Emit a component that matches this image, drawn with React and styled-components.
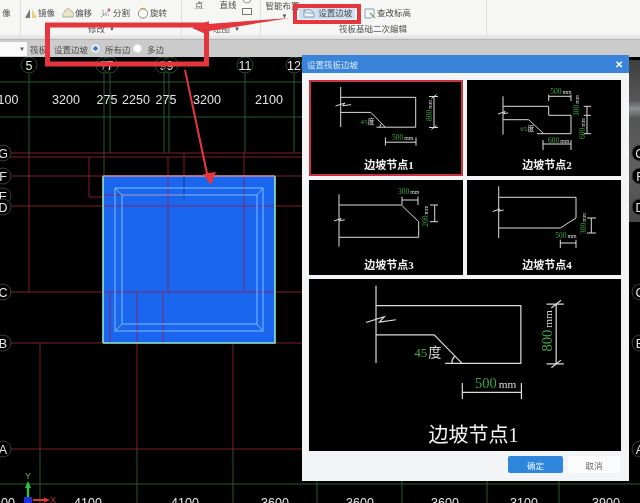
import React from 'react';
import styled, { createGlobalStyle } from 'styled-components';

const GlobalStyle = createGlobalStyle`
html, body {
	margin: 0;
	padding: 0;
	background: #000;
}
`;

const sansStack = `"Liberation Sans", "Noto Sans CJK SC", sans-serif`;
const serifStack = `"Liberation Serif", "Noto Sans CJK SC", serif`;

const Page = styled.div`
position: relative;
display: flex;
flex-direction: column;
width: 640px;
height: 503px;
overflow: hidden;
font-family: ${sansStack};
filter: blur(.5px);
`;

/* ribbon */
const Ribbon = styled.div`
display: flex;
flex: none;
height: 39px;
background: linear-gradient(#f6f6f5 85%, #dedede);
color: #4a4a4a;
font-size: 8.5px;
`;
const RibbonGroup = styled.div`
display: flex;
flex-direction: column;
flex: none;
box-sizing: border-box;
width: ${({$width}) => $width}px;
padding-left: ${({$inset}) => $inset || 0}px;
border-right: 1px solid #dfdfdf;
overflow: hidden;
`;
const ToolRow = styled.div`
display: flex;
height: 22px;
box-sizing: border-box;
padding-top: ${({$raised}) => $raised ? 0 : 4}px;
align-items: ${({$raised}) => $raised ? 'flex-start' : 'center'};
`;
const Tool = styled.div`
display: flex;
align-items: center;
gap: 1px;
flex: none;
width: ${({$width}) => $width}px;
margin-left: ${({$offset}) => $offset || 0}px;
line-height: 11px;
white-space: nowrap;
`;
const ActiveTool = styled(Tool)`
height: 12px;
padding-left: 4px;
box-sizing: border-box;
background: #cddff0;
`;
const ToolStack = styled.div`
display: flex;
flex-direction: column;
align-items: center;
flex: none;
width: ${({$width}) => $width}px;
margin-left: ${({$offset}) => $offset || 0}px;
line-height: 11px;
white-space: nowrap;
`;
const TallToolStack = styled(ToolStack)`
margin-top: -4px;
line-height: 10px;
`;
const GroupLabel = styled.div`
height: 14px;
line-height: 14px;
color: #555;
text-align: ${({$right}) => $right ? 'right' : 'left'};
padding-left: ${({$pad}) => $pad || 0}px;
padding-right: ${({$padRight}) => $padRight || 0}px;
`;
const Caret = styled.span`
font-size: 6px;
margin-left: 4px;
vertical-align: 1px;
`;

/* option bar under the ribbon */
const OptionBar = styled.div`
display: flex;
align-items: center;
flex: none;
height: 18px;
box-sizing: border-box;
border-top: 1px solid #b5b5b5;
background: #cbcbcb;
color: #4c4c4c;
font-size: 8.5px;
`;
const Combo = styled.div`
display: flex;
justify-content: flex-end;
align-items: center;
box-sizing: border-box;
width: 27px;
height: 14px;
padding-right: 2px;
margin-right: 3px;
background: #fafafa;
color: #555;
font-size: 6px;
`;
const OptionLabel = styled.span`
flex: none;
width: ${({$width}) => $width}px;
white-space: nowrap;
`;
const Radio = styled.span`
flex: none;
box-sizing: border-box;
width: 9px;
height: 9px;
margin-right: ${({$gap}) => $gap}px;
border-radius: 50%;
background: ${({$on}) => $on ? 'radial-gradient(#3d7fd0 0 2px, #fff 2.5px)' : '#fff'};
border: 1px solid #e2e2e2;
`;

/* drawing area */
const Canvas = styled.div`
position: relative;
flex: 1;
min-height: 0;
background: #000;
`;
const CanvasSvg = styled.svg`
position: relative;
z-index: 1;
display: block;
width: 640px;
height: 446px;
`;
const SideDock = styled.div`
position: absolute;
top: 3px;
right: 0;
width: 12px;
height: 162px;
background: linear-gradient(#3f3f3f, #565656 25%, #8b8f8f 30%, #565656 36%, #5f5f5f 70%, #474747);
`;
const GridText = styled.text`
fill: #e4e4e4;
font-family: ${sansStack};
font-size: 12.5px;
text-anchor: middle;
`;

/* dialog */
const Dialog = styled.div`
position: absolute;
left: 302px;
top: 55px;
z-index: 2;
width: 327px;
height: 426px;
display: flex;
flex-direction: column;
background: #f3f4f6;
`;
const DialogTitle = styled.div`
display: flex;
justify-content: space-between;
align-items: center;
flex: none;
height: 18px;
padding: 0 6px 0 5px;
background: #3a83da;
color: #dce9f8;
font-size: 8.5px;
`;
const CloseMark = styled.span`
color: #fff;
font-size: 10px;
font-weight: bold;
`;
const NodeGrid = styled.div`
display: grid;
grid-template-columns: 154px 154px;
grid-template-rows: 96px 95px 172px;
gap: 4px;
margin: 7px 8px 0 7px;
`;
const NodeCell = styled.div`
display: flex;
flex-direction: column;
grid-column: ${({$wide}) => $wide ? '1 / 3' : 'auto'};
background: #000;
box-shadow: ${({$active}) => $active ? 'inset 0 0 0 2px #c8323c' : 'none'};
`;
const NodeCaption = styled.div`
text-align: center;
padding-left: ${({$large}) => $large ? 17 : 6}px;
margin-top: ${({$large}) => $large ? 3 : -2}px;
color: #f2f2f2;
font-family: ${serifStack};
font-weight: ${({$large}) => $large ? 'normal' : 'bold'};
font-size: ${({$large}) => $large ? 20 : 11}px;
line-height: ${({$large}) => $large ? 26 : 18}px;
`;
const NodeSvg = styled.svg`
display: block;
flex: none;
width: 100%;
height: ${({$large}) => $large ? 140 : 78}px;
fill: none;
stroke: #dcdcdc;
stroke-width: ${({$large}) => $large ? 1.2 : 1}px;

path {
	vector-effect: non-scaling-stroke;
}
`;
const DimText = styled.text`
stroke: none;
font-family: ${serifStack};
font-size: ${({$size}) => $size || 7.5}px;
`;
const Num = styled.tspan`
fill: #3fa53f;
`;
const Unit = styled.tspan`
fill: #d8d8d8;
font-size: ${({$full}) => $full ? '1em' : '.78em'};
`;
const DialogFooter = styled.div`
display: flex;
justify-content: flex-end;
gap: 5px;
margin: 5px 9px 0 0;
`;
const DialogButton = styled.div`
display: flex;
align-items: center;
justify-content: center;
width: ${({$primary}) => $primary ? 55 : 52}px;
height: 17px;
border-radius: 2px;
background: ${({$primary}) => $primary ? '#2f86dd' : '#fcfcfc'};
color: ${({$primary}) => $primary ? '#eaf3fc' : '#666'};
font-size: 8.5px;
`;

/* red marks drawn on top of the screenshot */
const MarkLayer = styled.svg`
position: absolute;
left: 0;
top: 0;
z-index: 3;
width: 640px;
height: 503px;
pointer-events: none;
`;

const Icon = ({children}) => <svg width="12" height="12" viewBox="0 0 12 12">{children}</svg>;

const MirrorIcon = () => <Icon>
	<path d="M0 11 L5 2 V11Z" fill="#77776c" />
	<path d="M7 2 L12 11 H7Z" fill="#e8d27c" />
</Icon>;
const OffsetIcon = () => <Icon>
	<path d="M1 10 C0 6 3 6 3 4 C4 1 8 1 9 4 C12 5 12 8 11 10Z" fill="#ece5c8" stroke="#9a9a88" strokeWidth=".8" />
</Icon>;
const SplitIcon = () => <Icon>
	<path d="M1 10 L10 3 M3 3 V8 H9" fill="none" stroke="#7b7b7b" strokeWidth="1" strokeDasharray="1.5 1" />
	<circle cx="9" cy="3" r="1.4" fill="#c9627e" />
</Icon>;
const RotateIcon = () => <Icon>
	<circle cx="6" cy="6.5" r="4.6" fill="#fafafa" stroke="#8c8c80" strokeWidth="1" />
	<path d="M3 2.5 A5 5 0 0 1 9 2.5" fill="none" stroke="#c6a94f" strokeWidth="1.2" />
</Icon>;
const SlabIcon = () => <Icon>
	<path d="M1 3 H8 L11 7 V10 H1Z" fill="#eef3f8" stroke="#6f8aa6" strokeWidth=".8" />
	<path d="M1 3 L3 6 H11" fill="none" stroke="#6f8aa6" strokeWidth=".8" />
</Icon>;
const LevelIcon = () => <Icon>
	<path d="M1 2 H10 V8 L7 11 H1Z" fill="#f3f7f7" stroke="#7d9aa3" strokeWidth=".9" />
	<path d="M6 6 L11 11" stroke="#7fa55f" strokeWidth="1.2" />
</Icon>;
const RectStackIcon = () => <svg width="12" height="16" viewBox="0 0 12 16">
	<circle cx="6" cy="-1" r="4" fill="#fafafa" stroke="#999" />
	<rect x="1.5" y="8.5" width="9" height="6" fill="#fafafa" stroke="#777" />
</svg>;

const gridGreen = [
	[29, 73, 29, 157], [104, 73, 104, 176], [110, 73, 110, 153], [164, 73, 164, 153],
	[169, 73, 169, 153], [245, 73, 245, 153], [294, 73, 294, 153],
	[0, 82, 302, 82], [0, 117, 302, 117], [0, 484, 640, 484],
	[40, 450, 40, 503], [137, 450, 137, 503], [233, 450, 233, 503], [317, 481, 317, 503],
	[402, 481, 402, 503], [487, 481, 487, 503], [559, 481, 559, 503],
];
const gridRed = [
	[0, 153, 302, 153], [0, 157, 302, 157], [0, 176, 302, 176], [0, 206, 302, 206],
	[0, 292, 302, 292], [0, 343, 302, 343], [0, 449, 302, 449],
	[29, 157, 29, 292], [89, 157, 89, 197], [89, 197, 103, 197],
	[168, 157, 168, 292], [184, 153, 184, 176], [244, 153, 244, 292],
	[110, 292, 110, 343], [137, 292, 137, 450], [163, 292, 163, 343],
	[40, 343, 40, 450], [233, 343, 233, 450],
];
const topBubbles = [[29, '5'], [104, '7'], [110, '7'], [163, '9'], [170, '9'], [245, '11'], [294, '12']];
const sideBubbles = [[3, 153, 'G'], [3, 176, 'F'], [3, 196, 'E'], [3, 207, 'D'], [3, 292, 'C'], [3, 343, 'B'], [3, 449, 'A'],
	[640, 153, 'G'], [640, 176, 'F'], [640, 207, 'D'], [640, 292, 'C'], [640, 343, 'B'], [640, 449, 'A']];
const topSpans = [[8, '100'], [66, '3200'], [107, '275'], [136, '2250'], [166, '275'], [207, '3200'], [269, '2100']];
const bottomSpans = [[8, '00'], [88, '4100'], [185, '4100'], [275, '3600'], [360, '3600'], [445, '3600'], [524, '3100'], [606, '3900']];

const SlabPlan = () => <>
	<rect x="103" y="176" width="172" height="167" fill="#1a66ee" />
	<path d="M168 176 V292 M244 176 V292 M103 206 H275 M103 292 H275 M110 292 V343 M137 292 V343 M163 292 V343 M103 195 H184" stroke="#7b2a6e" strokeWidth="1" fill="none" />
	<path d="M184 176 V198" stroke="#123a80" strokeWidth="1" />
	<path d="M103 343 H275 V176 M103 176 V343" fill="none" stroke="#93e8c4" strokeWidth="1.6" />
	<path d="M103 176 H275" stroke="#d98a9a" strokeWidth="1.4" />
	<g fill="none" stroke="#7fbcff" strokeWidth="1">
		<rect x="115" y="188" width="148" height="143" />
		<rect x="122" y="195" width="135" height="129" />
		<path d="M115 188 L122 195 M263 188 L257 195 M115 331 L122 324 M263 331 L257 324" />
	</g>
</>;

const CadPlan = () => <CanvasSvg viewBox="0 57 640 446">
	{gridGreen.map(([x1, y1, x2, y2]) => <line key={`${x1}-${y1}-${x2}-${y2}`} x1={x1} y1={y1} x2={x2} y2={y2} stroke="#24592f" />)}
	{gridRed.map(([x1, y1, x2, y2]) => <line key={`${x1}-${y1}-${x2}-${y2}`} x1={x1} y1={y1} x2={x2} y2={y2} stroke="#7c2029" />)}
	<SlabPlan />
	{topBubbles.map(([x, label]) => <g key={x}>
		<circle cx={x} cy={65} r="8" fill="#000" fillOpacity=".4" stroke="#24492c" />
		<GridText x={x} y={70}>{label}</GridText>
	</g>)}
	{sideBubbles.map(([x, y, label]) => <g key={`${x}-${y}`}>
		<circle cx={x} cy={y} r="8" fill="#000" stroke="#3c3c36" />
		<GridText x={x} y={y + 4.5}>{label}</GridText>
	</g>)}
	{topSpans.map(([x, label]) => <GridText key={x} x={x} y={104}>{label}</GridText>)}
	{bottomSpans.map(([x, label]) => <GridText key={x} x={x} y={507}>{label}</GridText>)}
	<path d="M28 488 V498" stroke="#2fc24a" strokeWidth="2.4" />
	<path d="M25 488 L28 481 L31 488Z" fill="#2fc24a" />
	<path d="M33 500 H46" stroke="#e6322f" strokeWidth="2" />
	<path d="M44 497.5 L50 500 L44 502.5Z" fill="#e6322f" />
	<rect x="24" y="497" width="8" height="6" fill="#1c2fd8" />
	<text x="28" y="479" fill="#6ea86e" fontSize="9" textAnchor="middle" fontFamily={sansStack}>Y</text>
	<text x="53" y="503" fill="#b3303a" fontSize="9" textAnchor="middle" fontFamily={sansStack}>X</text>
</CanvasSvg>;

const Dim = ({x, y, num, unit, size, rotate}) => <DimText x={x} y={y} $size={size} transform={rotate ? `rotate(-90 ${x} ${y})` : undefined}>
	<Num>{num}</Num><Unit dx="1">{unit}</Unit>
</DimText>;

const NodeOne = ({large}) => <NodeSvg $large={large} viewBox={large ? '-3 3.5 161.1 72.5' : '0 0 154 78'} preserveAspectRatio="xMinYMin meet">
	<path d="M31.7 7 V47 M26.5 26 L36 23 L33.5 25.8 L42 24.6" />
	<path d="M31.7 17.3 H106.7 V47.2 H67.5 M76.3 47.2 L61.8 32.4 H31.7" />
	<path d="M71 47.2 A5 5 0 0 1 72.4 43.5" />
	<path d="M125 16.5 V47.5 M120 16.5 H129 M120 47.5 H129 M122.5 18.5 L127.5 14.5 M122.5 49.5 L127.5 45.5" />
	<path d="M76.4 62.2 H107 M76.4 57.4 V65.6 M107 57.4 V65.6" />
	<DimText x="51.5" y="43.9" $size="6.8"><Num>45</Num><Unit $full dx=".5">度</Unit></DimText>
	<Dim x={123} y={41} num="800" unit="mm" rotate />
	<Dim x={83} y={60} num="500" unit="mm" />
</NodeSvg>;

const NodeTwo = () => <NodeSvg viewBox="0 0 154 78">
	<path d="M36 16.3 V54.7 M31 34 L38 31.5 L36.5 33.8 L41 32.8" />
	<path d="M36 26.3 H81.7 V35.3 H104 V53.7 H70 M76.7 53.7 L61.7 39.7 H36" />
	<path d="M81.7 16.3 H104 M81.7 14.7 V21 M104 14.7 V21" />
	<path d="M120 26.3 V53.7 M116.7 26.3 H124 M116.7 35.3 H124 M116.7 53.7 H124" />
	<path d="M76 64 H104 M76 60 V70 M104 60 V70" />
	<DimText x="53.3" y="51" $size="6.8"><Num>65</Num><Unit $full dx=".5">度</Unit></DimText>
	<Dim x={83.3} y={14} num="500" unit="mm" />
	<Dim x={112} y={36} num="300" unit="mm" rotate />
	<Dim x={118} y={59} num="600" unit="mm" rotate />
	<Dim x={81} y={63} num="600" unit="mm" />
</NodeSvg>;

const NodeThree = () => <NodeSvg viewBox="0 0 154 78">
	<path d="M30 14.3 V66.7 M25 41 L32 38.5 L30.5 40.8 L35.7 39.7" />
	<path d="M30 25 H92.3 L109.7 41.7 V57.3 H30" />
	<path d="M93 20 H109 M93 16.7 V25 M109 16.7 V25" />
	<path d="M125.7 25 V41.7 M121 25 H129 M121 41.7 H129" />
	<Dim x={89} y={14.3} num="300" unit="mm" />
	<Dim x={119} y={46.7} num="200" unit="mm" rotate />
</NodeSvg>;

const NodeFour = () => <NodeSvg viewBox="0 0 154 78">
	<path d="M31.7 6.3 V58 M25.7 31.5 L33 29 L31.5 31.2 L36.7 30" />
	<path d="M31.7 17.3 H109 V38 L93.3 48 H31.7" />
	<path d="M124.3 38 V53 M120 38 H129 M120 53 H129" />
	<path d="M93.3 63 H109 M93.3 59.7 V68 M109 59.7 V68" />
	<Dim x={119} y={54} num="300" unit="mm" rotate />
	<Dim x={88.3} y={58} num="500" unit="mm" />
</NodeSvg>;

const Marks = () => <MarkLayer viewBox="0 0 640 503">
	<g fill="none" stroke="#e5353d">
		<rect x="47.5" y="25" width="159" height="39" strokeWidth="5" />
		<rect x="295" y="6" width="64" height="16" strokeWidth="4" />
	</g>
	<g fill="#e5353d">
		<path d="M192 28 L209 21 L208 24 L290 18 L209 31 L208 35Z" />
		<path d="M184 70 L186 70 L208 173 L216 172 L211 185 L203 174 L206 174Z" />
	</g>
</MarkLayer>;

const App = () => <Page>
	<GlobalStyle />
	<Ribbon>
		<RibbonGroup $width={21}>
			<ToolRow><Tool $width={20}>&nbsp;像</Tool></ToolRow>
		</RibbonGroup>
		<RibbonGroup $width={161} $inset={4}>
			<ToolRow>
				<Tool $width={37}><MirrorIcon />镜像</Tool>
				<Tool $width={38}><OffsetIcon />偏移</Tool>
				<Tool $width={37}><SplitIcon />分割</Tool>
				<Tool $width={37}><RotateIcon />旋转</Tool>
			</ToolRow>
			<GroupLabel $pad={63}>修改<Caret>▼</Caret></GroupLabel>
		</RibbonGroup>
		<RibbonGroup $width={79} $inset={10}>
			<ToolRow $raised>
				<ToolStack $width={14}>点</ToolStack>
				<ToolStack $width={18} $offset={13}>直线</ToolStack>
				<ToolStack $width={12} $offset={4}><RectStackIcon /></ToolStack>
			</ToolRow>
			<GroupLabel $pad={21}>绘图<Caret>▼</Caret></GroupLabel>
		</RibbonGroup>
		<RibbonGroup $width={226} $inset={5}>
			<ToolRow>
				<TallToolStack $width={33}>
					<span>智能布置</span>
					<Caret>▼</Caret>
				</TallToolStack>
				<ActiveTool $width={56}><SlabIcon />&nbsp;设置边坡</ActiveTool>
				<Tool $width={50} $offset={9}><LevelIcon />查改标高</Tool>
			</ToolRow>
			<GroupLabel $right $padRight={79}>筏板基础二次编辑</GroupLabel>
		</RibbonGroup>
	</Ribbon>
	<OptionBar>
		<Combo>▼</Combo>
		<OptionLabel $width={24}>筏板</OptionLabel>
		<OptionLabel $width={37}>设置边坡</OptionLabel>
		<Radio $on $gap={5} />
		<OptionLabel $width={28}>所有边</OptionLabel>
		<Radio $gap={5} />
		<OptionLabel $width={20}>多边</OptionLabel>
	</OptionBar>
	<Canvas>
		<SideDock />
		<CadPlan />
	</Canvas>
	<Dialog>
		<DialogTitle>设置筏板边坡<CloseMark>✕</CloseMark></DialogTitle>
		<NodeGrid>
			<NodeCell $active><NodeOne /><NodeCaption>边坡节点1</NodeCaption></NodeCell>
			<NodeCell><NodeTwo /><NodeCaption>边坡节点2</NodeCaption></NodeCell>
			<NodeCell><NodeThree /><NodeCaption>边坡节点3</NodeCaption></NodeCell>
			<NodeCell><NodeFour /><NodeCaption>边坡节点4</NodeCaption></NodeCell>
			<NodeCell $wide><NodeOne large /><NodeCaption $large>边坡节点1</NodeCaption></NodeCell>
		</NodeGrid>
		<DialogFooter>
			<DialogButton $primary>确定</DialogButton>
			<DialogButton>取消</DialogButton>
		</DialogFooter>
	</Dialog>
	<Marks />
</Page>;

export default App;
